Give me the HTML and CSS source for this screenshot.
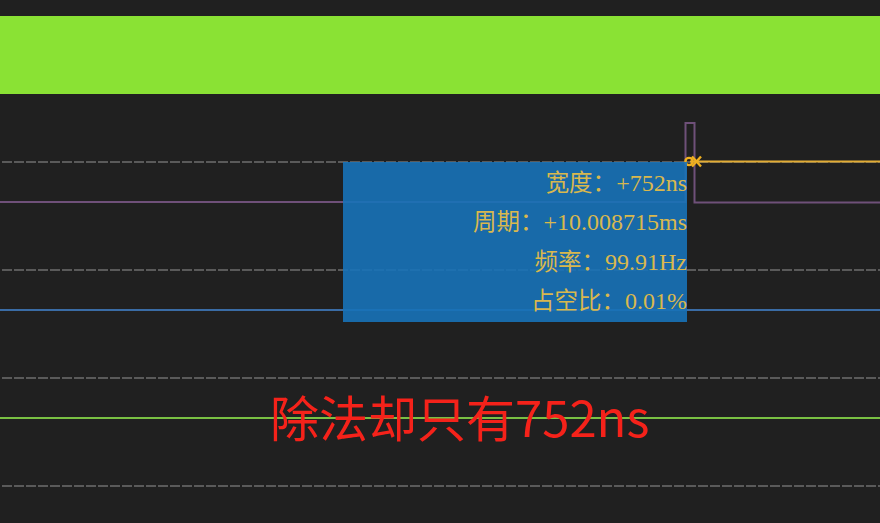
FILE: index.html
```html
<!DOCTYPE html>
<html lang="zh-CN">
<head>
<meta charset="utf-8">
<title>Scope</title>
<link rel="stylesheet" href="styles.css">
</head>
<body>
<div class="scope">
  <div class="band"></div>
  <div class="plot">
    <svg class="traces" width="880" height="429" viewBox="0 0 880 429" xmlns="http://www.w3.org/2000/svg">
      <g class="grid">
        <line x1="2" y1="68" x2="880" y2="68"/>
        <line x1="2" y1="176" x2="880" y2="176"/>
        <line x1="2" y1="284" x2="880" y2="284"/>
        <line x1="2" y1="392" x2="880" y2="392"/>
      </g>
      <polyline class="ch-purple" points="0,108 685.5,108 685.5,29 694.5,29 694.5,108.5 880,108.5"/>
      <line class="ch-yellow" x1="690" y1="67.5" x2="880" y2="67.5"/>
      <line class="ch-blue" x1="0" y1="216" x2="880" y2="216"/>
      <line class="ch-green" x1="0" y1="324" x2="880" y2="324"/>
      <g class="marker">
        <circle cx="689" cy="67.5" r="3.6"/>
        <line x1="692" y1="62.5" x2="701" y2="72.5"/>
        <line x1="692" y1="72.5" x2="701" y2="62.5"/>
      </g>
    </svg>
    <div class="tooltip">
      <div class="row">宽度：<span class="num">+752ns</span></div>
      <div class="row">周期：<span class="num">+10.008715ms</span></div>
      <div class="row">频率：<span class="num">99.91Hz</span></div>
      <div class="row">占空比：<span class="num">0.01%</span></div>
    </div>
    <div class="note">除法却只有752ns</div>
  </div>
</div>
</body>
</html>
```

FILE: styles.css
```css
html, body {
  margin: 0;
  padding: 0;
  background: #202020;
}

.scope {
  width: 880px;
  height: 523px;
  display: flex;
  flex-direction: column;
  overflow: hidden;
  background: #202020;
}

.band {
  margin-top: 16px;
  height: 78px;
  background: #8ae234;
  flex: none;
}

.plot {
  position: relative;
  flex: 1;
}

.traces {
  display: block;
}

.grid line {
  stroke: #5a5a5a;
  stroke-width: 2;
  stroke-dasharray: 10 2;
}

.ch-purple {
  fill: none;
  stroke: #6f5079;
  stroke-width: 2;
}

.ch-yellow {
  stroke: #e3ad35;
  stroke-width: 2;
}

.ch-blue {
  stroke: #3a6ca5;
  stroke-width: 2;
}

.ch-green {
  stroke: #79c043;
  stroke-width: 2;
}

.marker circle,
.marker line {
  fill: none;
  stroke: #f0b020;
  stroke-width: 2.4;
}

.tooltip {
  position: absolute;
  left: 343px;
  top: 68px;
  width: 344px;
  height: 160px;
  box-sizing: border-box;
  padding-top: 2px;
  background: rgba(23, 114, 184, 0.9);
  color: #d9b84e;
  font-family: "Liberation Serif", "Noto Sans CJK SC", serif;
  font-size: 23.5px;
  text-align: right;
}

.row {
  line-height: 39.3px;
  height: 39.3px;
  white-space: nowrap;
}

.num {
  font-size: 24px;
}

.note {
  position: absolute;
  left: 270px;
  top: 294px;
  color: #f5221a;
  font-family: "Noto Sans CJK SC", sans-serif;
  font-size: 49px;
  line-height: 56px;
  white-space: nowrap;
}
```
